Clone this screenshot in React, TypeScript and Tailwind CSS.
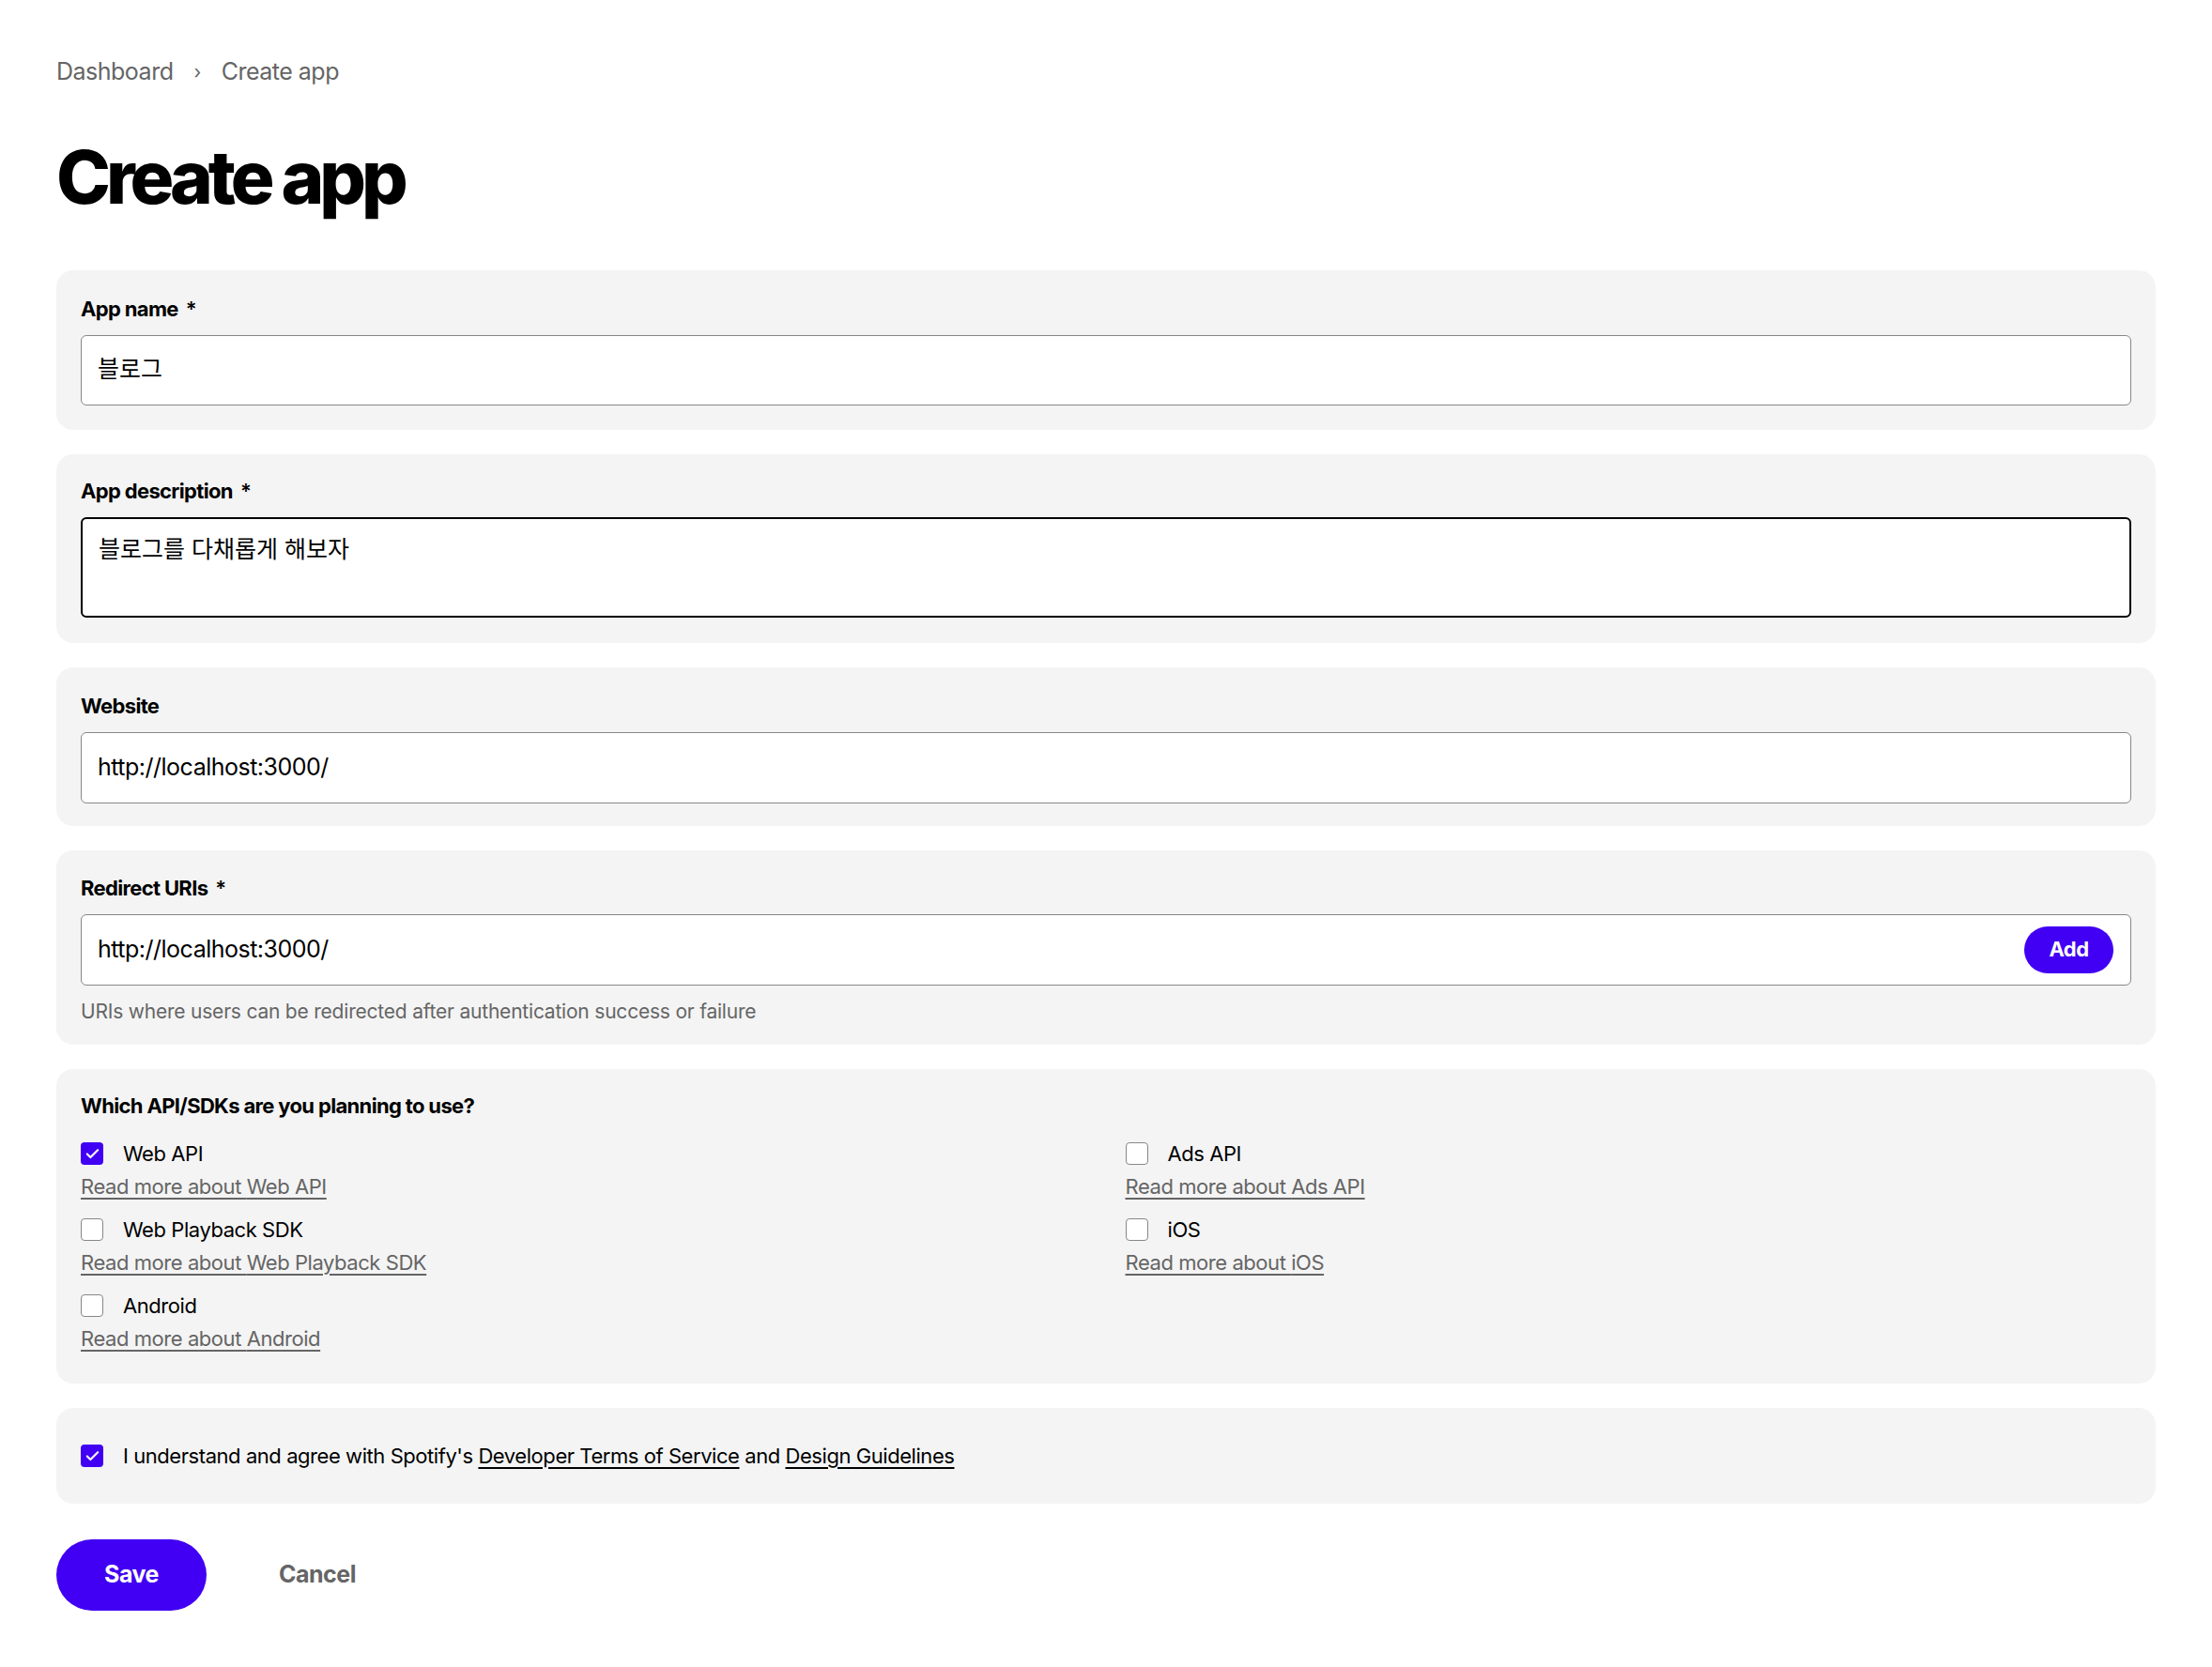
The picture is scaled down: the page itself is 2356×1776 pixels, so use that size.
import { Check } from "lucide-react";

const font = { fontFamily: 'Inter, "Noto Sans CJK KR", sans-serif' };

function Card({ children, className = "" }: { children: React.ReactNode; className?: string }) {
  return <div className={`rounded-[18px] bg-[#f4f4f4] px-[26px] ${className}`}>{children}</div>;
}

function Label({ text, required }: { text: string; required?: boolean }) {
  return (
    <div className="text-[22px] font-bold tracking-[-0.03em] text-black leading-none">
      {text}
      {required && <span className="ml-2 font-semibold">*</span>}
    </div>
  );
}

function Box({ checked }: { checked?: boolean }) {
  return checked ? (
    <span className="flex h-[24px] w-[24px] shrink-0 items-center justify-center rounded-[4px] bg-[#4100f4]">
      <Check className="h-[17px] w-[17px] text-white" strokeWidth={3} />
    </span>
  ) : (
    <span className="h-[24px] w-[24px] shrink-0 rounded-[4px] border-[1.5px] border-[#878787] bg-white" />
  );
}

function Api({ name, checked }: { name: string; checked?: boolean }) {
  return (
    <div className="flex flex-col">
      <div className="flex h-[36px] items-center gap-[21px]">
        <Box checked={checked} />
        <span className="text-[22px] tracking-[-0.02em] text-black">{name}</span>
      </div>
      <a className="mt-[1px] h-[36px] text-[22px] tracking-[-0.02em] text-[#656565] underline underline-offset-4">
        Read more about {name}
      </a>
    </div>
  );
}

export default function App() {
  return (
    <div style={font} className="min-h-[1776px] w-full bg-white px-[60px] pt-[58px]">
      {/* Breadcrumb */}
      <div className="flex items-center gap-[22px] text-[25px] tracking-[-0.02em] text-[#656565]">
        <span>Dashboard</span>
        <span className="text-[20px]">›</span>
        <span>Create app</span>
      </div>

      <h1 className="mt-[54px] text-[78px] font-extrabold leading-none tracking-[-0.065em] text-black">Create app</h1>

      <div className="mt-[60px] flex flex-col gap-[26px]">
        <Card className="pt-[30px] pb-[26px]">
          <Label text="App name" required />
          <div className="mt-[17px] flex h-[75px] items-center rounded-[6px] border-[1.5px] border-[#878787] bg-white px-[17px] text-[25px]">
            블로그
          </div>
        </Card>

        <Card className="pt-[28px] pb-[27px]">
          <Label text="App description" required />
          <div className="mt-[17px] h-[107px] rounded-[6px] border-2 border-black bg-white px-[17px] pt-[20px] text-[25px] leading-none">
            블로그를 다채롭게 해보자
          </div>
        </Card>

        <Card className="pt-[30px] pb-[24px]">
          <Label text="Website" />
          <div className="mt-[17px] flex h-[76px] items-center rounded-[6px] border-[1.5px] border-[#878787] bg-white px-[17px] text-[25px] tracking-[-0.02em]">
            http://localhost:3000/
          </div>
        </Card>

        <Card className="pt-[29px] pb-[20px]">
          <Label text="Redirect URIs" required />
          <div className="mt-[17px] flex h-[76px] items-center justify-between rounded-[6px] border-[1.5px] border-[#878787] bg-white pl-[17px] pr-[18px] text-[25px] tracking-[-0.02em]">
            <span>http://localhost:3000/</span>
            <button className="h-[50px] w-[95px] rounded-full bg-[#4100f4] text-[22px] font-bold text-white">Add</button>
          </div>
          <div className="mt-[12px] text-[21px] tracking-[-0.01em] text-[#656565]">
            URIs where users can be redirected after authentication success or failure
          </div>
        </Card>

        <Card className="pt-[28px] pb-[28px]">
          <Label text="Which API/SDKs are you planning to use?" />
          <div className="mt-[22px] grid grid-cols-2 gap-x-[41px] gap-y-[8px]">
            <Api name="Web API" checked />
            <Api name="Ads API" />
            <Api name="Web Playback SDK" />
            <Api name="iOS" />
            <Api name="Android" />
          </div>
        </Card>

        <Card className="flex h-[102px] items-center">
          <div className="flex items-center gap-[21px] text-[22px] tracking-[-0.02em] text-black">
            <Box checked />
            <span>
              I understand and agree with Spotify's{" "}
              <a className="underline underline-offset-4">Developer Terms of Service</a> and{" "}
              <a className="underline underline-offset-4">Design Guidelines</a>
            </span>
          </div>
        </Card>
      </div>

      <div className="mt-[38px] flex items-center gap-[77px]">
        <button className="h-[76px] w-[160px] rounded-full bg-[#4100f4] text-[25px] font-bold tracking-[-0.02em] text-white">
          Save
        </button>
        <button className="text-[25px] font-bold tracking-[-0.02em] text-[#656565]">Cancel</button>
      </div>
    </div>
  );
}
